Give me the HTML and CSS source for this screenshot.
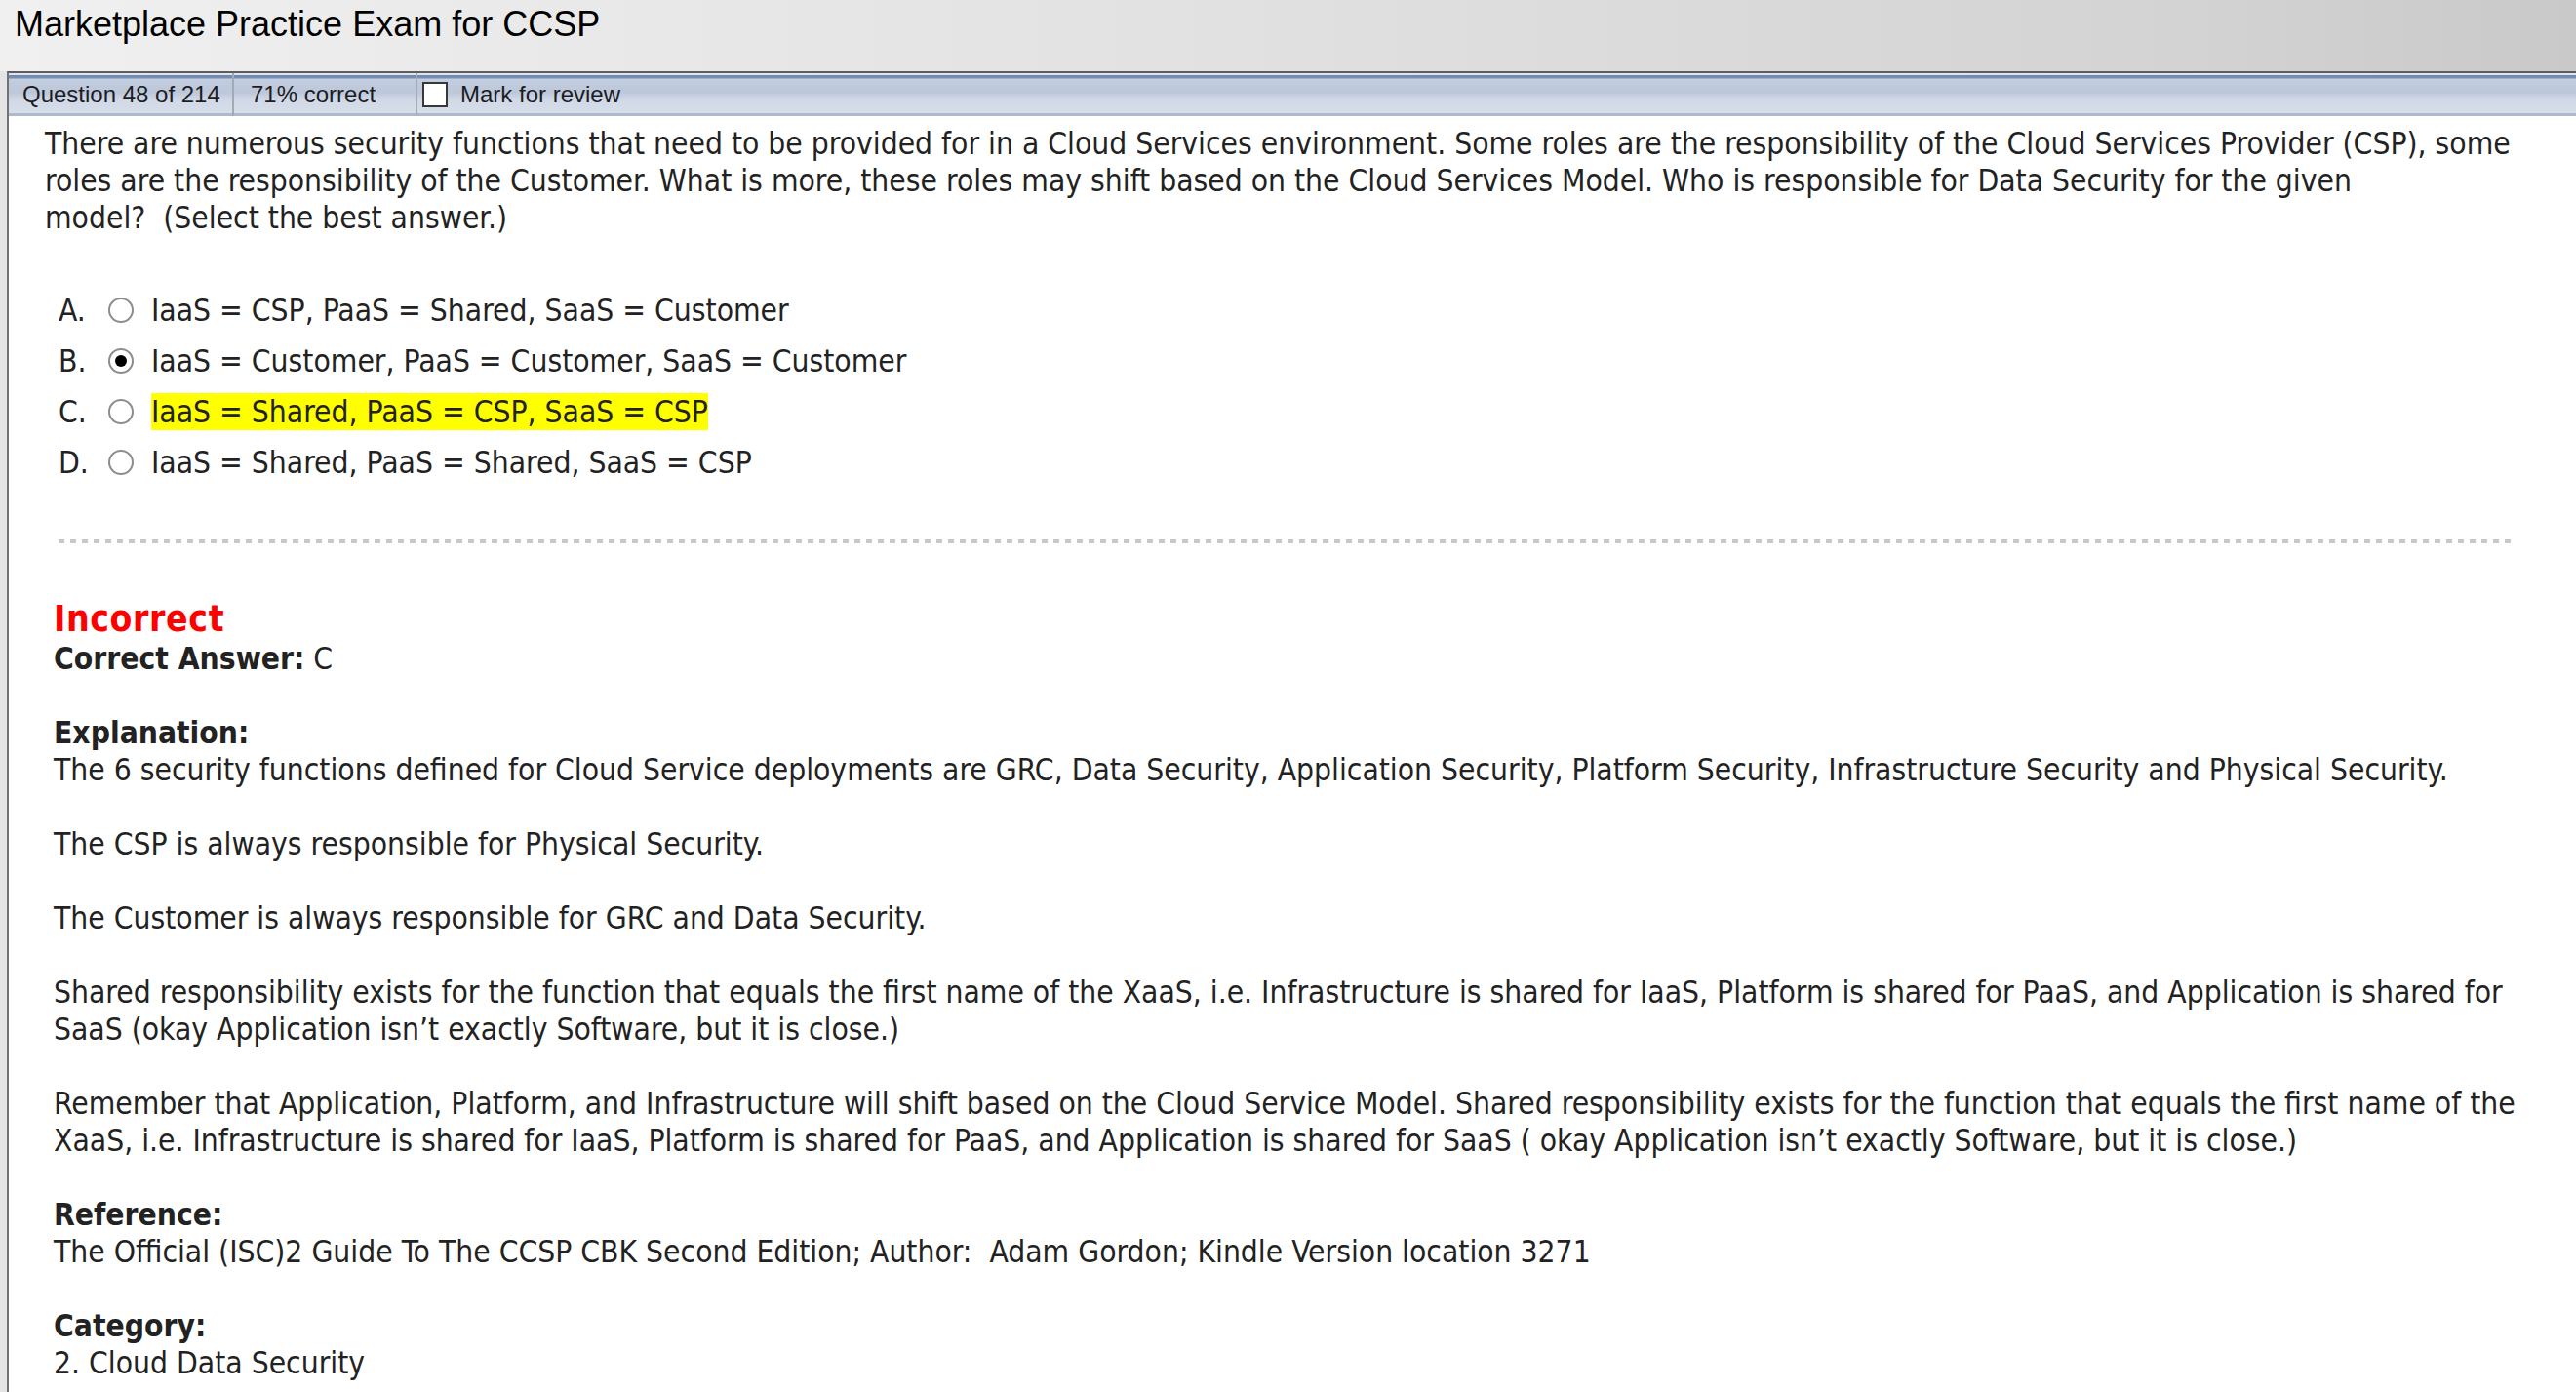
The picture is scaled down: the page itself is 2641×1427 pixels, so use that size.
FILE: index.html
```html
<!DOCTYPE html>
<html lang="en">
<head>
<meta charset="UTF-8">
<title>Marketplace Practice Exam for CCSP</title>
<link rel="stylesheet" href="styles.css">
</head>
<body>

<div class="titlebar">Marketplace Practice Exam for CCSP</div>

<div class="window">

  <!-- STATUS TOOLBAR -->
  <div class="toolbar">
    <div class="tb-item tb-count">Question 48 of 214</div>
    <div class="tb-item tb-score">71% correct</div>
    <label class="tb-item tb-mark"><span class="checkbox"></span>Mark for review</label>
  </div>

  <div class="content">
    <p class="question">
      There are numerous security functions that need to be provided for in a Cloud Services environment. Some roles are the responsibility of the Cloud Services Provider (CSP), some<br>
      roles are the responsibility of the Customer. What is more, these roles may shift based on the Cloud Services Model. Who is responsible for Data Security for the given<br>
      model?&nbsp; (Select the best answer.)
    </p>

    <ol class="options">
      <li class="option">
        <span class="opt-letter">A.</span><span class="radio"></span>
        <span class="opt-text">IaaS = CSP, PaaS = Shared, SaaS = Customer</span>
      </li>
      <li class="option">
        <span class="opt-letter">B.</span><span class="radio checked"></span>
        <span class="opt-text">IaaS = Customer, PaaS = Customer, SaaS = Customer</span>
      </li>
      <li class="option">
        <span class="opt-letter">C.</span><span class="radio"></span>
        <span class="opt-text correct">IaaS = Shared, PaaS = CSP, SaaS = CSP</span>
      </li>
      <li class="option">
        <span class="opt-letter">D.</span><span class="radio"></span>
        <span class="opt-text">IaaS = Shared, PaaS = Shared, SaaS = CSP</span>
      </li>
    </ol>

    <div class="divider"></div>

    <!-- ANSWER FEEDBACK -->
    <div class="result">
      <div class="verdict">Incorrect</div>
      <p><strong>Correct Answer:</strong> C</p>

      <p><strong>Explanation:</strong><br>
      The 6 security functions defined for Cloud Service deployments are GRC, Data Security, Application Security, Platform Security, Infrastructure Security and Physical Security.</p>

      <p>The CSP is always responsible for Physical Security.</p>

      <p>The Customer is always responsible for GRC and Data Security.</p>

      <p>Shared responsibility exists for the function that equals the first name of the XaaS, i.e. Infrastructure is shared for IaaS, Platform is shared for PaaS, and Application is shared for<br>
      SaaS (okay Application isn’t exactly Software, but it is close.)</p>

      <p>Remember that Application, Platform, and Infrastructure will shift based on the Cloud Service Model. Shared responsibility exists for the function that equals the first name of the<br>
      XaaS, i.e. Infrastructure is shared for IaaS, Platform is shared for PaaS, and Application is shared for SaaS ( okay Application isn’t exactly Software, but it is close.)</p>

      <p><strong>Reference:</strong><br>
      The Official (ISC)2 Guide To The CCSP CBK Second Edition; Author:&nbsp; Adam Gordon; Kindle Version location 3271</p>

      <p><strong>Category:</strong><br>
      2. Cloud Data Security</p>
    </div>
  </div>

</div>

</body>
</html>
```

FILE: styles.css
```css
* { box-sizing: border-box; }
body { margin: 0; background: #e4e4e4; }

/* TITLE BAR */
.titlebar {
  height: 73px;
  padding: 5px 0 0 15px;
  font: 36px/40px "Liberation Sans", Arial, sans-serif;
  color: #000;
  background: linear-gradient(to right, #f0f0f0, #e2e2e2 45%, #d3d3d3 85%, #c9c9c9);
}

/* WINDOW FRAME */
.window {
  margin-left: 7px;
  min-height: calc(100vh - 73px);
  background: #fff;
  border-top: 2px solid #5e5e5e;
  border-left: 2px solid #727272;
}

/* TOOLBAR */
.toolbar {
  display: flex;
  height: 44px;
  font: 24px/44px "Liberation Sans", Arial, sans-serif;
  color: #1c1c24;
  background: linear-gradient(to bottom,
    #dfe5ee 0, #dfe5ee 2px,
    #6f87ae 2px, #7890b5 5px,
    #c3cde0 6px, #bcc7da 45%,
    #d0d8e6 60%, #d6deea 92%,
    #adb9cc 94%, #adb9cc 100%);
}

.tb-item {
  display: flex;
  align-items: center;
  height: 100%;
  white-space: nowrap;
}

.tb-count { width: 231px; padding-left: 14px; border-right: 2px solid #a2aab6; }
.tb-score { width: 188px; padding-left: 17px; border-right: 2px solid #a2aab6; }
.tb-mark  { padding-left: 5px; }

.checkbox {
  width: 26px;
  height: 26px;
  margin-right: 13px;
  background: #fff;
  border: 2px solid #383838;
}

/* QUESTION */
.content {
  padding: 9px 28px 0 37px;
  font-family: "DejaVu Sans Condensed", "DejaVu Sans", Tahoma, sans-serif;
  font-size: 31.5px;
  line-height: 38px;
  color: #222;
}

.question { margin: 0; white-space: nowrap; }

.options {
  list-style: none;
  margin: 57px 0 0 14px;
  padding: 0;
}

.option {
  display: flex;
  align-items: center;
  height: 38px;
  margin-bottom: 14px;
  white-space: nowrap;
}
.option:last-child { margin-bottom: 0; }

.opt-letter { width: 51px; }

.radio {
  position: relative;
  width: 26px;
  height: 26px;
  margin-right: 18px;
  border: 2px solid #8d8d8d;
  border-radius: 50%;
  background: #fff;
}

.radio.checked::after {
  content: "";
  position: absolute;
  top: 5px;
  left: 5px;
  width: 12px;
  height: 12px;
  border-radius: 50%;
  background: #000;
}

.opt-text.correct { background: #ffff00; }

.divider {
  height: 4px;
  margin: 60px 38px 0 14px;
  background: repeating-linear-gradient(to right, #c8c8c8 0, #c8c8c8 6px, transparent 6px, transparent 12px);
}

/* RESULT */
.result { margin: 57px 0 0 9px; }

.verdict {
  font-size: 37px;
  line-height: 42px;
  letter-spacing: 0.6px;
  font-weight: bold;
  color: #ff0000;
}

.result p { margin: 0 0 38px; white-space: nowrap; }
.result p:last-child { margin-bottom: 0; }
```
